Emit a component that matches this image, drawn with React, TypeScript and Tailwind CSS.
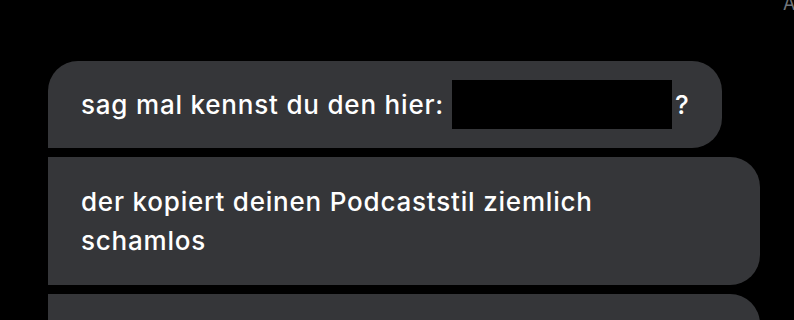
export default function App() {
  return (
    <div
      className="w-[794px] h-[320px] overflow-hidden bg-black text-white"
      style={{ fontFamily: '"Inter", "Noto Sans", sans-serif' }}
    >
      <div className="h-[61px] overflow-hidden flex justify-end">
        <span className="-mt-[6px] -mr-[3px] text-[18px] leading-[20px] text-[#71767b] w-[14px] overflow-hidden">
          A
        </span>
      </div>
      <div className="flex flex-col items-start gap-[9px] pl-[48px]">
        <div className="flex items-center bg-[#353639] rounded-tl-[30px] rounded-tr-[30px] rounded-br-[30px] rounded-bl-none pl-[33px] pr-[32px] py-[19px] text-[26px] leading-[39px] font-medium tracking-[0.8px]">
          <span>sag mal kennst du den hier:</span>
          <span className="ml-[8px] inline-block w-[220px] h-[49px] bg-black" />
          <span className="ml-[3px]">?</span>
        </div>
        <div className="w-[712px] bg-[#353639] rounded-r-[30px] pl-[33px] pr-[32px] py-[25px] text-[26px] leading-[39px] font-medium tracking-[0.8px]">
          <p className="max-w-[590px]">der kopiert deinen Podcaststil ziemlich schamlos</p>
        </div>
        <div className="w-[712px] h-[80px] bg-[#353639] rounded-tr-[30px]" />
      </div>
    </div>
  );
}
